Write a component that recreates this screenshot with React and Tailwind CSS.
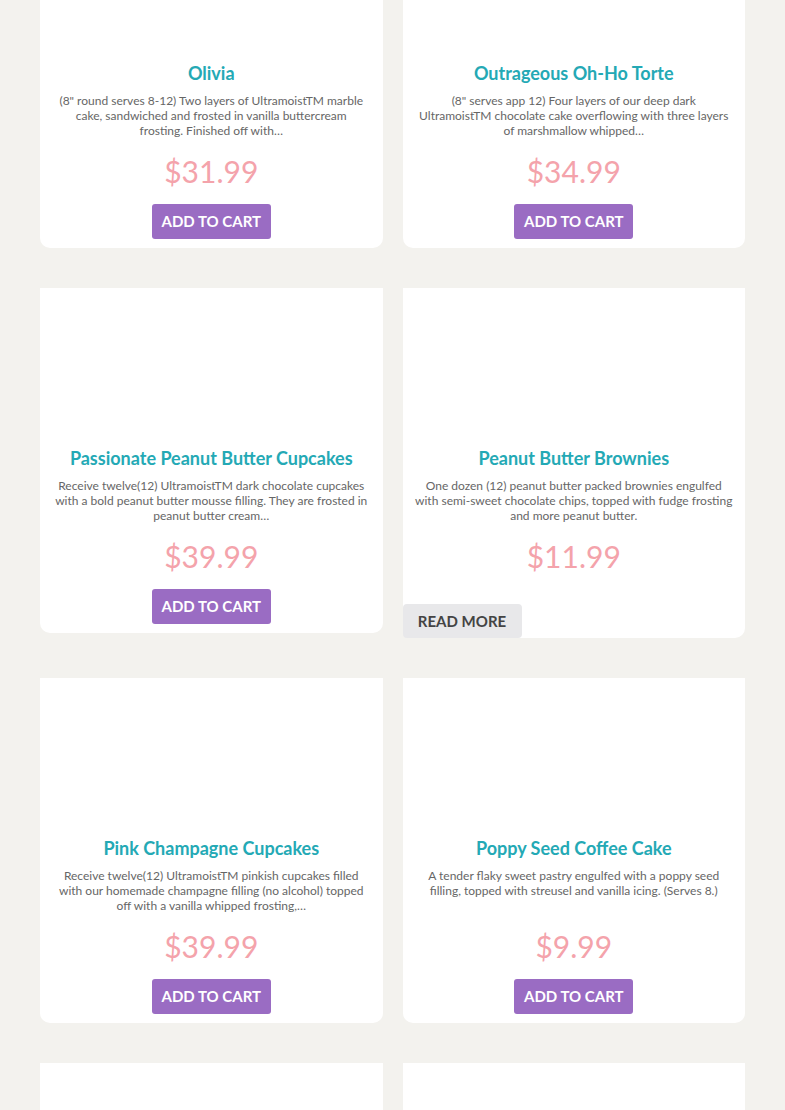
const products = [
  {
    name: "Olivia",
    desc: "(8\" round serves 8-12) Two layers of UltramoistTM marble cake, sandwiched and frosted in vanilla buttercream\nfrosting. Finished off with…",
    price: "$31.99",
  },
  {
    name: "Outrageous Oh-Ho Torte",
    desc: "(8\" serves app 12) Four layers of our deep dark UltramoistTM chocolate cake overflowing with three layers of marshmallow whipped…",
    price: "$34.99",
  },
  {
    name: "Passionate Peanut Butter Cupcakes",
    desc: "Receive twelve(12) UltramoistTM dark chocolate cupcakes with a bold peanut butter mousse filling. They are frosted in peanut butter cream…",
    price: "$39.99",
  },
  {
    name: "Peanut Butter Brownies",
    desc: "One dozen (12) peanut butter packed brownies engulfed with semi-sweet chocolate chips, topped with fudge frosting and more peanut butter.",
    price: "$11.99",
    readMore: true,
  },
  {
    name: "Pink Champagne Cupcakes",
    desc: "Receive twelve(12) UltramoistTM pinkish cupcakes filled with our homemade champagne filling (no alcohol) topped off with a vanilla whipped frosting,…",
    price: "$39.99",
  },
  {
    name: "Poppy Seed Coffee Cake",
    desc: "A tender flaky sweet pastry engulfed with a poppy seed filling, topped with streusel and vanilla icing. (Serves 8.)",
    price: "$9.99",
  },
  { name: "", desc: "", price: "" },
  { name: "", desc: "", price: "" },
];

function ProductCard({ product }) {
  return (
    <div className="flex flex-col items-center rounded-b-[10px] bg-white">
      <div className="h-[158px] w-full" />
      <h3 className="text-[18px] font-bold leading-6 text-[#24a9b5]">{product.name}</h3>
      <p className="mt-2 h-[45px] whitespace-pre-line px-3 text-center text-[12px] leading-[15px] text-[#666]">
        {product.desc}
      </p>
      <div className="mt-[13px] text-[30px] leading-10 text-[#f4a3ab]">{product.price}</div>
      {product.readMore ? (
        <button className="mt-[28px] h-[34px] w-[119px] self-start rounded-[4px] bg-[#e8e8ea] text-[15px] font-bold text-[#444]">
          READ MORE
        </button>
      ) : (
        <button className="mb-[9px] mt-[13px] h-[35px] w-[119px] rounded-[3px] bg-[#9a6cc3] text-[15px] font-bold text-white">
          ADD TO CART
        </button>
      )}
    </div>
  );
}

export default function App() {
  return (
    <main className="h-[1110px] overflow-hidden bg-[#f3f2ee] px-10 font-['Lato','Liberation_Sans',sans-serif]">
      <div className="-mt-[97px] grid grid-cols-2 items-start gap-x-5 gap-y-10">
        {products.map((product, idx) => (
          <ProductCard key={idx} product={product} />
        ))}
      </div>
    </main>
  );
}
